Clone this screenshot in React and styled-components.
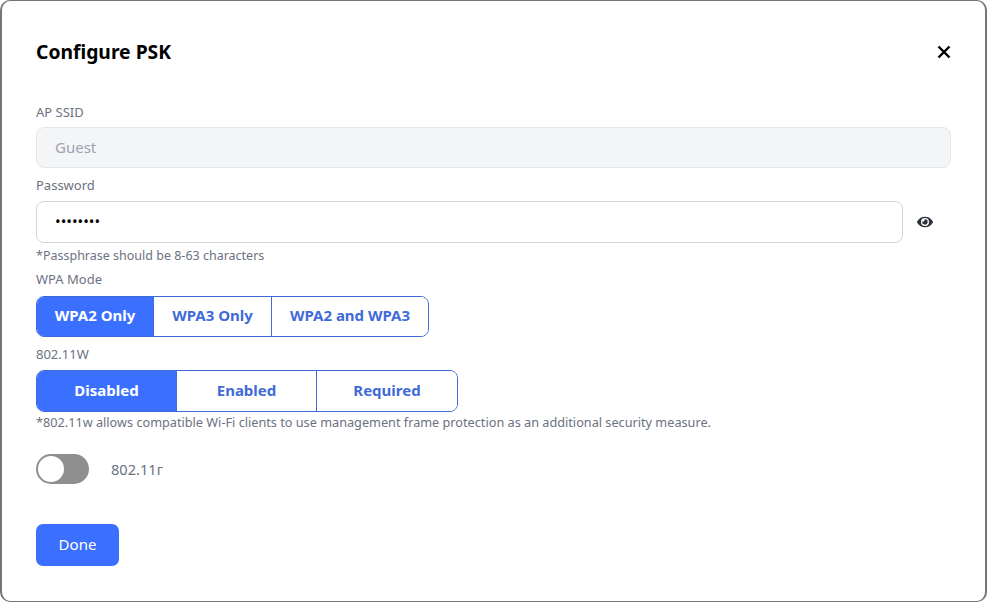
import React from 'react';
import styled, { createGlobalStyle } from 'styled-components';
import { FaEye } from 'react-icons/fa';

const GlobalStyle = createGlobalStyle`
  html, body {
    margin: 0;
    padding: 0;
    background: #fff;
    font-family: "Noto Sans", "Open Sans", sans-serif;
  }
  * {
    box-sizing: border-box;
  }
`;

const Modal = styled.div`
  width: 987px;
  height: 602px;
  padding: 33px 34px 0 34px;
  background: #fff;
  border-style: solid;
  border-color: #757575;
  border-width: 1px 2px;
  border-radius: 10px;
  overflow: hidden;
`;

const Header = styled.div`
  display: flex;
  align-items: center;
  justify-content: space-between;
  height: 36px;
  margin-bottom: 33px;
`;

const Title = styled.h2`
  margin: 0;
  font-size: 19.3px;
  line-height: 36px;
  font-weight: 700;
  color: #000;
`;

const CloseButton = styled.button`
  display: flex;
  padding: 0;
  border: 0;
  background: none;
  cursor: pointer;
`;

const Label = styled.label`
  display: block;
  height: 18px;
  font-size: 13px;
  line-height: 18px;
  color: #6b7280;
`;

const Input = styled.input`
  display: block;
  width: 100%;
  height: ${(props) => props.$height}px;
  padding: 0 18px 2px;
  font-family: inherit;
  font-size: 15px;
  color: #000;
  background: ${(props) => (props.disabled ? '#f4f5f7' : '#fff')};
  border: 1px solid ${(props) => (props.disabled ? '#e5e7eb' : '#d1d5db')};
  border-radius: 8px;
  outline: none;

  &::placeholder {
    color: #9ca3af;
  }
`;

const SsidField = styled.div`
  margin-top: 6px;
  margin-bottom: 8px;
`;

const PasswordRow = styled.div`
  display: flex;
  align-items: center;
  margin-top: 7px;
`;

const EyeButton = styled.button`
  display: flex;
  justify-content: center;
  flex: 0 0 48px;
  padding: 0 4px 0 0;
  border: 0;
  background: none;
  color: #2b303a;
  font-size: 16px;
`;

const Hint = styled.p`
  height: 18px;
  margin: ${(props) => props.$top}px 0 ${(props) => props.$bottom}px;
  font-size: ${(props) => props.$size}px;
  line-height: 18px;
  color: #6b7280;
  white-space: nowrap;
`;

const Segments = styled.div`
  display: flex;
  width: fit-content;
  height: ${(props) => props.$height}px;
  margin-top: ${(props) => props.$top}px;
  border: 1px solid #3f6bd8;
  border-radius: 8px;
  overflow: hidden;
`;

const Segment = styled.button`
  width: ${(props) => props.$width}px;
  padding: 0 0 3px;
  border: 0;
  border-left: 1px solid #3f6bd8;
  font-family: inherit;
  font-size: 15px;
  font-weight: 700;
  color: ${(props) => (props.$active ? '#fff' : '#3f6bd8')};
  background: ${(props) => (props.$active ? '#3b6fff' : '#fff')};

  &:first-child {
    border-left: 0;
  }
`;

const SectionLabel = styled(Label)`
  margin-top: 8px;
`;

const ToggleRow = styled.div`
  display: flex;
  align-items: center;
  gap: 22px;
  margin-top: 23px;
`;

const Toggle = styled.div`
  display: flex;
  align-items: center;
  width: 53px;
  height: 30px;
  padding: 2px;
  background: #8f8f8f;
  border-radius: 15px;
`;

const Knob = styled.span`
  width: 26px;
  height: 26px;
  background: #fff;
  border-radius: 50%;
`;

const ToggleLabel = styled.span`
  font-size: 14.6px;
  color: #6b7280;
`;

const DoneButton = styled.button`
  display: block;
  width: 83px;
  height: 42px;
  margin-top: 40px;
  padding: 0 0 2px;
  border: 0;
  border-radius: 7px;
  font-family: inherit;
  font-size: 15px;
  color: #fff;
  background: #3b6fff;
`;

const wpaModes = [
  { name: 'WPA2 Only', width: 116, active: true },
  { name: 'WPA3 Only', width: 118 },
  { name: 'WPA2 and WPA3', width: 157 },
];

const pmfModes = [
  { name: 'Disabled', width: 139, active: true },
  { name: 'Enabled', width: 140 },
  { name: 'Required', width: 141 },
];

const App = () => {
  return (
    <>
      <GlobalStyle />
      <Modal>
        <Header>
          <Title>Configure PSK</Title>
          <CloseButton aria-label="Close">
            <svg width="14" height="14" viewBox="0 0 14 14">
              <path d="M1.5 1.5l11 11M12.5 1.5l-11 11" stroke="#000" strokeWidth="2.4" fill="none" />
            </svg>
          </CloseButton>
        </Header>

        <Label>AP SSID</Label>
        <SsidField>
          <Input $height={41} disabled placeholder="Guest" />
        </SsidField>

        <Label>Password</Label>
        <PasswordRow>
          <Input $height={42} type="password" defaultValue="password" />
          <EyeButton aria-label="Show password">
            <FaEye />
          </EyeButton>
        </PasswordRow>
        <Hint $size={12.5} $top={4} $bottom={5}>*Passphrase should be 8-63 characters</Hint>

        <Label>WPA Mode</Label>
        <Segments $height={41} $top={8}>
          {wpaModes.map((m) => (
            <Segment key={m.name} $width={m.width} $active={m.active}>{m.name}</Segment>
          ))}
        </Segments>

        <SectionLabel>802.11W</SectionLabel>
        <Segments $height={42} $top={7}>
          {pmfModes.map((m) => (
            <Segment key={m.name} $width={m.width} $active={m.active}>{m.name}</Segment>
          ))}
        </Segments>
        <Hint $size={12.7} $top={1} $bottom={0}>
          *802.11w allows compatible Wi-Fi clients to use management frame protection as an additional security measure.
        </Hint>

        <ToggleRow>
          <Toggle>
            <Knob />
          </Toggle>
          <ToggleLabel>802.11г</ToggleLabel>
        </ToggleRow>

        <DoneButton>Done</DoneButton>
      </Modal>
    </>
  );
};

export default App;
